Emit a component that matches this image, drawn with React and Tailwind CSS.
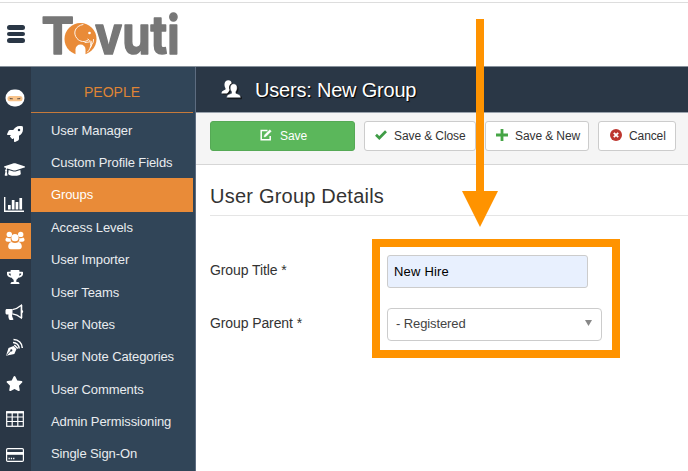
import React from 'react';
import { FaRocket, FaGraduationCap, FaTrophy, FaStar } from 'react-icons/fa';

const menuItems = [
  'User Manager',
  'Custom Profile Fields',
  'Groups',
  'Access Levels',
  'User Importer',
  'User Teams',
  'User Notes',
  'User Note Categories',
  'User Comments',
  'Admin Permissioning',
  'Single Sign-On',
];

const Logo = () => (
  <svg width="190" height="84" viewBox="-6 -21 190 84" className="-my-5 ml-[11px] shrink-0">
    <g fill="#777777" stroke="#777777" strokeWidth="1.600" strokeLinejoin="round" className="font-['Inter',sans-serif] font-bold">
      <text x="-0.500" y="40.500" fontSize="51" textLength="32.500" lengthAdjust="spacingAndGlyphs">T</text>
      <text x="53" y="40.500" fontSize="53" textLength="84.500" lengthAdjust="spacingAndGlyphs">vuti</text>
    </g>
    <circle cx="38.500" cy="26" r="16.800" fill="#fff" />
    <circle cx="38.500" cy="26" r="16" fill="#e98b38" />
    <path d="M33.500 43v-6.500a5 5 0 0 1 10 0V43z" fill="#fff" />
    <g fill="none" stroke="#fff" strokeWidth="0.900" strokeLinecap="round">
      <path d="M41 11.500C33 13 30.500 20 35 25.500c3 3.500 8 4 11 1.500" />
      <path d="M46 26c4 3.500 3.500 9-0.500 13" />
      <path d="M49 28c1.500 2.500 1 4.500-.5 6.500M51.500 26.500c0 2.500-.5 4-2 5" />
      <path d="M43 29.500l4-.5" />
    </g>
    <circle cx="47.500" cy="20" r="1.300" fill="#fff" />
  </svg>
);

const NinjaIcon = () => (
  <svg width="20" height="18" viewBox="0 0 20 18">
    <rect x="0.500" y="0.500" width="19" height="17" rx="8.500" fill="#fff" />
    <rect x="2.500" y="7" width="15" height="5.200" rx="2.500" fill="#f9c48b" />
    <path d="M4.500 8.800l3.500.6v.9H5zM15.500 8.800l-3.500.6v.9h3z" fill="#6b5748" />
  </svg>
);

const ChartIcon = () => (
  <svg width="21" height="17" viewBox="0 0 21 17" fill="#fff">
    <path d="M0 1h1.400v13.600H20V16H0z" />
    <path d="M4 9h2.700v4.500H4zM7.800 4h2.700v9.500H7.800zM11.600 6h2.700v7.500h-2.700zM15.400 2h2.700v11.500h-2.700z" />
  </svg>
);

const UsersIcon = () => (
  <svg width="20" height="19" viewBox="0 0 20 19" fill="#fff">
    <circle cx="4.300" cy="3.400" r="2.700" />
    <circle cx="15.700" cy="3.400" r="2.700" />
    <path d="M1.800 6.500c1.400 1 3 1 4 .2-.5 1.800 0 3.200 1 4.100H2.500C-.2 10.800 0 7.500 1.800 6.500z" />
    <path d="M18.200 6.500c-1.400 1-3 1-4 .2.5 1.800 0 3.200-1 4.100h4.300c2.700 0 2.500-3.300.7-4.300z" />
    <circle cx="10" cy="6.700" r="3.600" />
    <path d="M6.500 10.900c2.200 1.500 4.800 1.500 7 0 2.300.4 3.300 2.600 3.300 4.600 0 1.600-1 2.700-2.600 2.700H5.800c-1.600 0-2.600-1.100-2.600-2.700 0-2 1-4.200 3.300-4.600z" />
  </svg>
);

const BullhornIcon = () => (
  <svg width="19" height="17" viewBox="0 0 19 17" fill="#fff">
    <path d="M2 5h5.500v5.500H7c.1 2 .5 3.300 1.600 4.700-1 1.100-3.500 1.100-4.500.2-.7-2-.9-3-.6-4.900H2c-1 0-1.500-.6-1.500-1.500V6.500C.5 5.600 1 5 2 5z" />
    <path d="M7.500 5.700c3.200-.5 6-2 8.800-4.400v12.600C13.500 11.600 10.700 10.200 7.500 9.800" fill="none" stroke="#fff" strokeWidth="1.300" />
    <path d="M16 1h1.300v5c1.200.6 1.200 2.500 0 3.100v5H16z" />
  </svg>
);

const BlogIcon = () => (
  <svg width="19" height="19" viewBox="0 0 19 19">
    <path d="M1 17.800L3.500 10l5-2 3 3-2.200 5z" fill="#fff" />
    <path d="M9.300 7l3.500 3.500" stroke="#fff" strokeWidth="1.600" />
    <path d="M1.500 17.300l4.300-4.500" stroke="#2a3746" strokeWidth="0.900" />
    <circle cx="6.300" cy="12.400" r="1.100" fill="#2a3746" />
    <path d="M8 4.600c3.500 0 6.200 2.600 6.200 6M8.500 1.500c5 0 8.800 3.800 8.800 8.500" fill="none" stroke="#fff" strokeWidth="1.500" />
  </svg>
);

const TableIcon = () => (
  <svg width="18" height="16" viewBox="0 0 18 16" fill="none" stroke="#fff">
    <rect x="0.700" y="0.700" width="16.600" height="14.600" strokeWidth="1.200" />
    <path d="M0 1.500h18" strokeWidth="1.800" />
    <path d="M1 6h16M1 10.500h16M6.200 1v14M11.800 1v14" strokeWidth="1.200" />
  </svg>
);

const CardIcon = () => (
  <svg width="18" height="14" viewBox="0 0 18 14">
    <rect x="0.600" y="0.600" width="16.800" height="12.800" rx="1.200" fill="none" stroke="#fff" strokeWidth="1.200" />
    <path d="M1 4h16v2.800H1z" fill="#fff" />
    <path d="M2.500 10.500h6" stroke="#fff" strokeWidth="1.400" strokeDasharray="1.300 1" />
  </svg>
);

const railIcons = [
  { id: 'profile', icon: <NinjaIcon /> },
  { id: 'launch', icon: <FaRocket size={16} /> },
  { id: 'courses', icon: <FaGraduationCap size={21} /> },
  { id: 'reports', icon: <ChartIcon /> },
  { id: 'people', icon: <UsersIcon />, active: true },
  { id: 'awards', icon: <FaTrophy size={16} /> },
  { id: 'marketing', icon: <BullhornIcon /> },
  { id: 'blog', icon: <BlogIcon /> },
  { id: 'favorites', icon: <FaStar size={17} /> },
  { id: 'tables', icon: <TableIcon /> },
  { id: 'billing', icon: <CardIcon /> },
];

const PeopleIcon = () => (
  <svg width="20" height="19" viewBox="0 0 20 19" fill="#fff" className="drop-shadow-[1px_1px_0_#111]">
    <path d="M7.300.2c2 0 3.200 1.200 3.400 3-2.600 1.200-3.200 4-2.100 6.900-.8 1.200-1.300 2.700-2.600 3.400H.5c0-2 .8-2.600 4-4V8.300C3 6 2.700.2 7.300.2z" />
    <path d="M12.700 3.800c4.300 0 4.100 5.600 2.200 8v1.500c3.700 1.300 4.800 2 4.800 4.500H5.700c0-2.500 1-3.200 4.800-4.500v-1.500c-1.900-2.400-2.100-8 2.200-8z" stroke="#2a3746" strokeWidth="0.500" />
  </svg>
);

const SaveIcon = () => (
  <svg width="12" height="12" viewBox="0 0 12 12" fill="none" stroke="#fff">
    <path d="M7.500 1.500H1.200v9.300h9V7" strokeWidth="1.500" />
    <path d="M4 8l.5-2L9.800.7l1.500 1.500L6 7.500z" fill="#fff" strokeWidth="0.400" />
  </svg>
);

const CheckIcon = () => (
  <svg width="12" height="10" viewBox="0 0 12 10">
    <path d="M1 4.800l3.300 3.200L11 1.200" fill="none" stroke="#3f9c46" strokeWidth="2.700" />
  </svg>
);

const PlusIcon = () => (
  <svg width="12" height="12" viewBox="0 0 12 12">
    <path d="M6 0v12M0 6h12" stroke="#46a546" strokeWidth="2.800" />
  </svg>
);

const CancelIcon = () => (
  <svg width="12" height="12" viewBox="0 0 12 12">
    <circle cx="6" cy="6" r="6" fill="#bd362f" />
    <path d="M3.800 3.800l4.400 4.400M8.200 3.800L3.800 8.200" stroke="#fff" strokeWidth="1.800" />
  </svg>
);

const ToolbarButton = ({ icon, label, className }) => (
  <button type="button" className={`flex h-[30px] shrink-0 items-center rounded-[3px] border border-[#ccc] bg-white pb-[2px] text-[12px] leading-none tracking-[-0.1px] text-[#333] ${className}`}>
    {icon}
    <span className="pt-px whitespace-nowrap">{label}</span>
  </button>
);

export default function App() {
  return (
    <div className="relative flex h-[471px] w-[688px] flex-col overflow-hidden bg-white font-['Liberation_Sans',Arial,sans-serif] text-[#333]">
      <header className="flex h-[67px] shrink-0 flex-col border-b border-[#87919b]">
        <div className="mt-[2px] h-px bg-[#ddd]" />
        <div className="flex h-[62px] items-center pl-[7px]">
          <div className="flex w-[18px] flex-col gap-[2px]">
            <span className="h-[5px] rounded-full bg-[#2a3746]" />
            <span className="h-[4px] rounded-full bg-[#2a3746]" />
            <span className="h-[5px] rounded-full bg-[#2a3746]" />
          </div>
          <Logo />
        </div>
      </header>

      <div className="flex min-h-0 flex-1">
        <nav className="flex w-[31px] shrink-0 flex-col bg-[#2a3746] pt-[13px] text-white">
          {railIcons.map((item) => (
            <div
              key={item.id}
              className={`flex w-full shrink-0 items-center justify-center pr-[2px] ${item.active ? 'h-[36px] bg-[#e98b38]' : 'h-[35.700px]'}`}
            >
              {item.icon}
            </div>
          ))}
        </nav>

        <aside className="w-[165px] shrink-0 border-r border-[#5d6c80] bg-[#314558] pr-[2px]">
          <div className="flex h-[46px] items-center justify-center border-b border-[#c67a3b] pt-[6px] text-[14px] text-[#df8435]">
            PEOPLE
          </div>
          <ul className="pt-[1.600px]">
            {menuItems.map((item) => (
              <li
                key={item}
                className={`flex items-center pl-5 text-[13px] tracking-[-0.1px] whitespace-nowrap ${item === 'Groups' ? '-mt-px h-[33.350px] bg-[#e98b38] text-white' : 'h-[32.350px] text-[#e9ecef]'}`}
              >
                {item}
              </li>
            ))}
          </ul>
        </aside>

        <main className="min-w-0 flex-1">
          <div className="flex h-[46px] items-center border-b border-[#9aa3ad] bg-[#2a3746] pl-[25px]">
            <PeopleIcon />
            <h1 className="ml-[14px] text-[20px] tracking-[-0.2px] text-white [text-shadow:1px_1px_1px_#000]">Users: New Group</h1>
          </div>
          <div className="flex h-[52px] border-b border-[#d6d6d6] bg-[#f5f5f5] pt-[8px] pl-[14px]">
            <ToolbarButton icon={<SaveIcon />} label="Save" className="w-[145px] justify-center gap-2 border-[#55a955]! bg-[#5bb75b]! pl-[2px] text-white!" />
            <ToolbarButton icon={<CheckIcon />} label="Save & Close" className="ml-[9px] w-[112px] gap-[7px] pl-[10px]" />
            <ToolbarButton icon={<PlusIcon />} label="Save & New" className="ml-[9px] w-[104px] gap-[7px] pl-[10px]" />
            <ToolbarButton icon={<CancelIcon />} label="Cancel" className="ml-[9px] w-[78px] gap-[7px] pl-[11px]" />
          </div>

          <section className="pl-[14px]">
            <h2 className="flex h-[51px] items-center border-b border-[#e5e5e5] pt-[12px] text-[20px] tracking-[0.220px]">User Group Details</h2>
            <div className="mt-[39px] flex h-[34px] text-[14px]">
              <label className="w-[177px] pt-[5px] tracking-[-0.1px]" htmlFor="groupTitle">Group Title *</label>
              <input
                id="groupTitle"
                type="text"
                defaultValue="New Hire"
                className="h-[33px] w-[201px] rounded-[3px] border border-[#ccc] bg-[#e8f0fe] px-[6px] text-[13px] tracking-[0.2px] text-black"
              />
            </div>
            <div className="mt-[19px] flex h-[34px] text-[14px]">
              <label className="w-[177px] pt-[5px] tracking-[-0.1px]">Group Parent *</label>
              <div className="flex h-[33px] w-[215px] items-center justify-between rounded-[4px] border border-[#ccc] pr-[9px] pb-px pl-[8px] text-[13px] tracking-[-0.1px] text-[#444]">
                <span>- Registered</span>
                <svg width="7" height="6" viewBox="0 0 7 6" className="-mt-[2px]">
                  <path d="M0 0h7L3.500 6z" fill="#888" />
                </svg>
              </div>
            </div>
          </section>
        </main>
      </div>

      {/* callout drawn over the form */}
      <div className="absolute top-[239px] left-[372px] h-[119px] w-[248px] border-[8px] border-[#ff9300]" />
      <svg width="38" height="210" viewBox="0 0 38 210" className="absolute top-[19px] left-[461px]">
        <path d="M15 0h8v172h14L19 208 1 172h14z" fill="#ff9300" />
      </svg>
    </div>
  );
}
